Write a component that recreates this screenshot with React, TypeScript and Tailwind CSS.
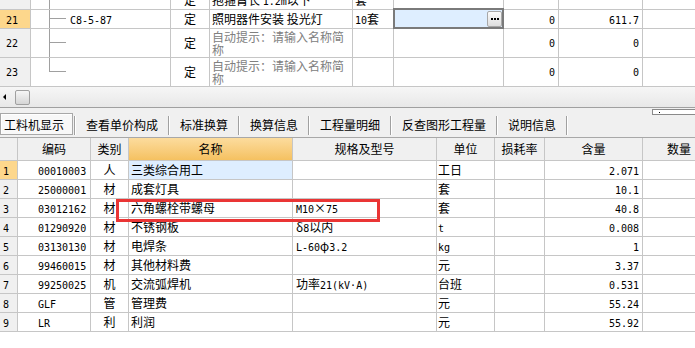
import type { ReactNode } from 'react'

const cell = 'border-r border-b border-[#c6c6c6] overflow-hidden whitespace-nowrap'
const topCols = 'grid grid-cols-[31px_140px_39px_143px_41px_110px_55px_84px_80px] w-[723px]'
const botCols = 'grid grid-cols-[18px_73px_38px_164px_144px_58px_50px_98px_73px] w-[716px]'

const M = ({ children }: { children: ReactNode }) => (
  <span className="font-['DejaVu_Sans_Mono',monospace] text-[10px]">{children}</span>
)

const Tree = ({ last }: { last?: boolean }) => (
  <div className="flex h-full w-[17px] shrink-0 flex-col">
    <div className="h-1/2 border-b border-l border-[#a0a0a0]" />
    <div className={last ? 'flex-1' : 'flex-1 border-l border-[#a0a0a0]'} />
  </div>
)

const hint = '自动提示：请输入名称简称'

const TopGrid = () => (
  <div className="h-[87px] overflow-hidden">
    {/* row 20, cut off at the top */}
    <div className={`${topCols} -mt-[9px] h-[19px]`}>
      <div className={`${cell} bg-[#f0f0f0]`} />
      <div className={`${cell} flex`}>
        <div className="w-[18px] shrink-0" />
        <div className="h-full border-l border-[#a0a0a0]" />
      </div>
      <div className={`${cell} flex items-center justify-center leading-[18px]`}>定</div>
      <div className={`${cell} pl-[2px] leading-[18px]`}>
        抱箍臂长 <M>1.2m</M>以下
      </div>
      <div className={`${cell} pl-[2px] leading-[18px]`}>套</div>
      <div className={cell} />
      <div className={cell} />
      <div className={cell} />
      <div className={cell} />
    </div>

    {/* row 21, selected */}
    <div className={`${topCols} h-[19px]`}>
      <div className={`${cell} bg-[#fdd78c] pl-[6px] leading-[18px]`}>
        <M>21</M>
      </div>
      <div className={`${cell} flex items-center`}>
        <div className="w-[18px] shrink-0" />
        <Tree />
        <div className="ml-[4px]">
          <M>C8-5-87</M>
        </div>
      </div>
      <div className={`${cell} flex items-center justify-center`}>定</div>
      <div className={`${cell} pl-[2px] leading-[18px]`}>照明器件安装 投光灯</div>
      <div className={`${cell} pl-[2px] leading-[18px]`}>
        <M>10</M>套
      </div>
      <div className="relative border-r border-b border-[#c6c6c6]">
        <div className="absolute -top-[2px] -right-[1px] -bottom-[1px] -left-[1px] flex items-center justify-end border-2 border-[#7a7a7a] bg-[#deeeff] pt-[1px]">
          <div className="flex h-[16px] w-[15px] items-center justify-center gap-[1px] rounded-[2px] border border-[#a8a8a8] bg-gradient-to-b from-[#fbfbfb] to-[#dedede]">
            <div className="h-[2px] w-[2px] bg-black" />
            <div className="h-[2px] w-[2px] bg-black" />
            <div className="h-[2px] w-[2px] bg-black" />
          </div>
        </div>
      </div>
      <div className={`${cell} pr-[3px] text-right leading-[18px]`}>
        <M>0</M>
      </div>
      <div className={`${cell} pr-[3px] text-right leading-[18px]`}>
        <M>611.7</M>
      </div>
      <div className={cell} />
    </div>

    {[22, 23].map((n) => (
      <div key={n} className={`${topCols} h-[29px]`}>
        <div className={`${cell} flex items-center bg-[#f0f0f0] pl-[6px]`}>
          <M>{n}</M>
        </div>
        <div className={`${cell} flex`}>
          <div className="w-[18px] shrink-0" />
          <Tree last={n === 23} />
        </div>
        <div className={`${cell} flex items-center justify-center`}>定</div>
        <div className="overflow-hidden border-r border-b border-[#c6c6c6] pt-[1px] pl-[2px] leading-[13px] text-[#808080]">
          {hint}
        </div>
        <div className={cell} />
        <div className={cell} />
        <div className={`${cell} flex items-center justify-end pr-[3px]`}>
          <M>0</M>
        </div>
        <div className={`${cell} flex items-center justify-end pr-[3px]`}>
          <M>0</M>
        </div>
        <div className={cell} />
      </div>
    ))}
  </div>
)

const ScrollBar = () => (
  <div className="flex h-[21px] items-center border-b border-[#a0a0a0] bg-gradient-to-b from-[#f6f6f6] to-[#e8e8e8] pl-[3px]">
    <div className="h-0 w-0 border-y-[3px] border-r-[3px] border-y-transparent border-r-black" />
    <div className="ml-[9px] h-[15px] w-[15px] rounded-[2px] border border-[#a0a0a0] bg-gradient-to-b from-[#f6f6f6] to-[#d6d6d6]" />
  </div>
)

const tabs = ['查看单价构成', '标准换算', '换算信息', '工程量明细', '反查图形工程量', '说明信息']

const Sep = () => <div className="h-[19px] w-[2px] shrink-0 border-l border-r border-l-[#a0a0a0] border-r-white" />

const TabBar = () => (
  <div className="relative flex h-[29px] items-end bg-[#f0f0f0] pb-[2px]">
    <div className="flex h-[22px] w-[73px] shrink-0 items-center border border-[#a8a8a8] bg-[#f8f8f8] pt-[1px] pl-[3px] shadow-[inset_1px_1px_0_#ffffff]">
      工料机显示
    </div>
    <div className="w-[1px] shrink-0" />
    <Sep />
    {tabs.map((t) => (
      <div key={t} className="flex shrink-0 items-end">
        <div className="flex h-[22px] items-center px-[10px] pt-[2px]">{t}</div>
        <Sep />
      </div>
    ))}
    <div className="absolute top-[1px] -right-[4px] flex h-[6px] w-[47px] items-center border border-[#8a8a8a] bg-white pl-[6px]">
      <div className="h-[1px] w-[1px] bg-black" />
    </div>
  </div>
)

type Row = [string, string, string, ReactNode, ReactNode, string]

const rows: Row[] = [
  ['00010003', '人', '三类综合用工', '', '工日', '2.071'],
  ['25000001', '材', '成套灯具', '', '套', '10.1'],
  ['03012162', '材', '六角螺栓带螺母', <><M>M10</M>×<M>75</M></>, '套', '40.8'],
  ['01290920', '材', '不锈钢板', <>δ<M>8</M>以内</>, <M>t</M>, '0.008'],
  ['03130130', '材', '电焊条', <><M>L-60</M>φ<M>3.2</M></>, <M>kg</M>, '1'],
  ['99460015', '材', '其他材料费', '', '元', '3.37'],
  ['99250025', '机', '交流弧焊机', <>功率<M>21(kV·A)</M></>, '台班', '0.531'],
  ['GLF', '管', '管理费', '', '元', '55.24'],
  ['LR', '利', '利润', '', '元', '55.92'],
]

const heads = ['', '编码', '类别', '名称', '规格及型号', '单位', '损耗率', '含量', '数量']

const BottomGrid = () => (
  <div>
    <div className={`${botCols} h-[24px] border-t border-[#a8a8a8] bg-[#f0f0f0]`}>
      {heads.map((h, i) => (
        <div
          key={i}
          className={
            i === 3
              ? `${cell} flex items-center justify-center bg-gradient-to-b from-[#fcdc9d] to-[#f5c160]`
              : `${cell} flex items-center justify-center`
          }
        >
          {h}
        </div>
      ))}
    </div>
    {rows.map(([code, kind, name, spec, unit, qty], i) => (
      <div key={code} className={`${botCols} h-[19px]`}>
        <div className={i === 0 ? `${cell} bg-[#fdd78c] pl-[3px] leading-[18px]` : `${cell} bg-[#f0f0f0] pl-[3px] leading-[18px]`}>
          <M>{i + 1}</M>
        </div>
        <div className={`${cell} pl-[20px] leading-[18px]`}>
          <M>{code}</M>
        </div>
        <div className={`${cell} text-center leading-[18px]`}>{kind}</div>
        <div className={i === 0 ? `${cell} bg-[#deeeff] pl-[2px] leading-[18px]` : `${cell} pl-[2px] leading-[18px]`}>{name}</div>
        <div className={`${cell} pl-[3px] leading-[18px]`}>{spec}</div>
        <div className={`${cell} pl-[1px] leading-[18px]`}>{unit}</div>
        <div className={cell} />
        <div className={`${cell} pr-[3px] text-right leading-[18px]`}>
          <M>{qty}</M>
        </div>
        <div className={cell} />
      </div>
    ))}
  </div>
)

export default function App() {
  return (
    <div className="relative h-[348px] w-[695px] overflow-hidden bg-white font-['Noto_Sans_CJK_SC','DejaVu_Sans',sans-serif] text-[12px] text-black">
      <TopGrid />
      <ScrollBar />
      <TabBar />
      <BottomGrid />
      {/* red highlight drawn over row 3 */}
      <div className="pointer-events-none absolute top-[199px] left-[116px] h-[23px] w-[264px] border-[3px] border-[#ea3535]" />
    </div>
  )
}
